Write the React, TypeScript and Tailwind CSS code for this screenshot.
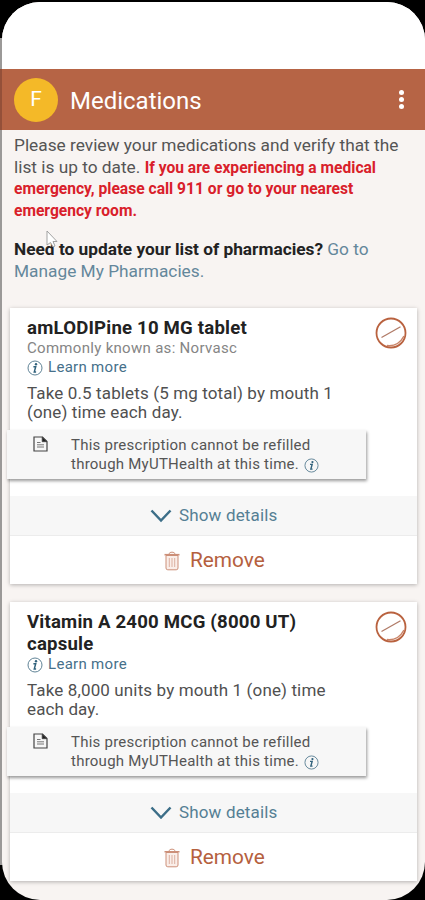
import type { ReactNode } from 'react';

interface Medication {
  id: number;
  name: string[];
  commonName?: string;
  instructions: string[];
}

const medications: Medication[] = [
  {
    id: 1,
    name: ['amLODIPine 10 MG tablet'],
    commonName: 'Norvasc',
    instructions: ['Take 0.5 tablets (5 mg total) by mouth 1', '(one) time each day.'],
  },
  {
    id: 2,
    name: ['Vitamin A 2400 MCG (8000 UT)', 'capsule'],
    instructions: ['Take 8,000 units by mouth 1 (one) time', 'each day.'],
  },
];

function InfoIcon({ className }: { className?: string }) {
  return (
    <svg viewBox="0 0 16 16" className={className} fill="none">
      <circle cx="8" cy="8" r="7" stroke="#5f8396" strokeWidth="1" />
      <circle cx="9" cy="4.3" r="1.2" fill="#31627c" />
      <path d="M6.4 6.8h2.3L7.3 11.9h1.8" stroke="#31627c" strokeWidth="1.5" />
    </svg>
  );
}

function PillIcon() {
  return (
    <svg viewBox="0 0 32 32" className="h-8 w-8" fill="none" stroke="#b9623f">
      <circle cx="16" cy="16" r="14.5" strokeWidth="1.8" />
      <path d="M6.5 20.5 25.5 9.8" strokeWidth="1.3" stroke="#b07a66" />
      <path d="M12 28.600c7.500.8 13.500-3 17-9.600" strokeWidth="1.5" stroke="#c98468" />
    </svg>
  );
}

function DocumentIcon() {
  return (
    <svg viewBox="0 0 15 16" className="h-4 w-[15px]" fill="none" stroke="#444">
      <path d="M1 1h8.5L14 5.5V15H1z" strokeWidth="1.2" />
      <path d="M9.2 1v4.7H14z" fill="#222" strokeWidth="0.8" />
      <path d="M4 6.5h3.5M4 8.800h7M4 11h7" strokeWidth="1" stroke="#777" />
    </svg>
  );
}

function TrashIcon() {
  return (
    <svg viewBox="0 0 16 20" className="h-5 w-4" fill="none" stroke="#cc8f78">
      <path d="M2 4.5h12V17a1.8 1.8 0 0 1-1.8 1.8H3.8A1.8 1.8 0 0 1 2 17z" fill="#faeee9" />
      <path d="M.5 3.7h15" strokeWidth="1.6" />
      <path d="M5 3.2C5 .5 11 .5 11 3.2" />
      <path d="M5.3 7v9M8 7v9M10.7 7v9" stroke="#dcb0a0" />
    </svg>
  );
}

function Line({ children }: { children: ReactNode }) {
  return <span className="block whitespace-nowrap">{children}</span>;
}

function MedicationCard({ medication }: { medication: Medication }) {
  return (
    <section className="bg-white pt-[9px] shadow-[0_1px_4px_rgba(0,0,0,0.28)]">
      <div className="flex justify-between pl-[17px] pr-[10px]">
        <div>
          <h2 className="text-[18.6px] font-bold leading-[22px] tracking-[0.2px] text-[#222]">
            {medication.name.map((line) => (
              <Line key={line}>{line}</Line>
            ))}
          </h2>
          {medication.commonName && (
            <p className="text-[15px] leading-[19px] tracking-[0.3px] text-[#858585]">
              Commonly known as: {medication.commonName}
            </p>
          )}
          <a className="flex h-[19px] items-center gap-[5px] text-[15px] leading-[19px] tracking-[0.3px] text-[#46708a]">
            <InfoIcon className="h-4 w-4" />
            Learn more
          </a>
          <p className="mt-[7px] text-[17px] leading-[18.5px] tracking-[0.13px] text-[#505050]">
            {medication.instructions.map((line) => (
              <Line key={line}>{line}</Line>
            ))}
          </p>
        </div>
        <PillIcon />
      </div>

      {/* Refill notice hangs slightly over the left edge of the card */}
      <div className="relative -ml-[3px] mt-[9px] flex h-[49px] w-[359px] bg-[#f7f7f7] pl-[26px] pt-[6px] shadow-[1px_2px_3px_rgba(0,0,0,0.4)]">
        <DocumentIcon />
        <p className="ml-[23px] text-[15px] leading-[19px] tracking-[0.24px] text-[#555]">
          <Line>This prescription cannot be refilled</Line>
          <Line>
            through MyUTHealth at this time.{' '}
            <InfoIcon className="ml-px inline-block h-[15px] w-[15px] align-[-4px]" />
          </Line>
        </p>
      </div>

      <button className="mt-[17px] flex h-10 w-full items-center border-b border-[#ececec] bg-[#f7f7f7] pl-[140px] text-[17px] tracking-[0.15px] text-[#557f94]">
        <svg viewBox="0 0 22 14" className="mr-[7px] h-[14px] w-[22px]" fill="none">
          <path d="M1.5 1.5 11 11.5 20.5 1.5" stroke="#3c6e88" strokeWidth="2.5" />
        </svg>
        Show details
      </button>
      <button className="flex h-12 w-full items-center pl-[154px] pt-px text-[20.8px] text-[#b5603e]">
        <span className="mr-[10px]">
          <TrashIcon />
        </span>
        Remove
      </button>
    </section>
  );
}

export default function App() {
  return (
    <div className="relative h-[900px] w-[425px] overflow-hidden bg-black font-['Roboto','Liberation_Sans',sans-serif]">
      {/* Device edge */}
      <div className="absolute left-0 top-[38px] h-[827px] w-[3px] bg-[#9b9998]" />

      <main className="relative ml-[2px] mt-[2px] h-[898px] overflow-hidden rounded-[38px] bg-[#f8f4f2]">
        <div className="h-[67px] bg-white" />
        <header className="flex h-[61px] items-center bg-[#b66445] pl-3 text-white">
          <div className="flex h-11 w-11 items-center justify-center rounded-full bg-[#f4b928] text-[21px]">F</div>
          <h1 className="ml-3 mt-[2px] text-[24px]">Medications</h1>
          <div className="ml-auto mr-[21px] flex flex-col gap-[2px]">
            <span className="h-[5px] w-[5px] rounded-full bg-white" />
            <span className="h-[5px] w-[5px] rounded-full bg-white" />
            <span className="h-[5px] w-[5px] rounded-full bg-white" />
          </div>
        </header>

        <div className="pl-3 pt-1 text-[17.3px] leading-[22px] text-[#555]">
          <p>
            <Line>Please review your medications and verify that the</Line>
            <Line>
              list is up to date.{' '}
              <b className="text-[15.6px] text-[#d9202a]">If you are experiencing a medical</b>
            </Line>
            <b className="text-[15.6px] leading-[21.5px] text-[#d9202a]">
              <Line>emergency, please call 911 or go to your nearest</Line>
              <Line>emergency room.</Line>
            </b>
          </p>
          <p className="mt-4">
            <Line>
              <b className="text-[#222]">Need to update your list of pharmacies?</b>{' '}
              <a className="text-[#64879b]">Go to</a>
            </Line>
            <Line>
              <a className="text-[#64879b]">Manage My Pharmacies.</a>
            </Line>
          </p>
        </div>

        <div className="ml-2 mr-2 mt-[26px] space-y-[18px]">
          {medications.map((medication) => (
            <MedicationCard key={medication.id} medication={medication} />
          ))}
        </div>
      </main>

      {/* Header bleeds over the device edge */}
      <div className="absolute left-0 top-[69px] h-[61px] w-[2px] bg-[#945039]" />

      {/* Mouse pointer */}
      <svg viewBox="0 0 12 19" className="absolute left-[46px] top-[230px] h-[19px] w-3">
        <path d="M1 1v14l3.5-2.5L7 17l2-1-2-4.5h4z" fill="#fff" stroke="#999" strokeWidth="0.9" />
      </svg>
    </div>
  );
}
